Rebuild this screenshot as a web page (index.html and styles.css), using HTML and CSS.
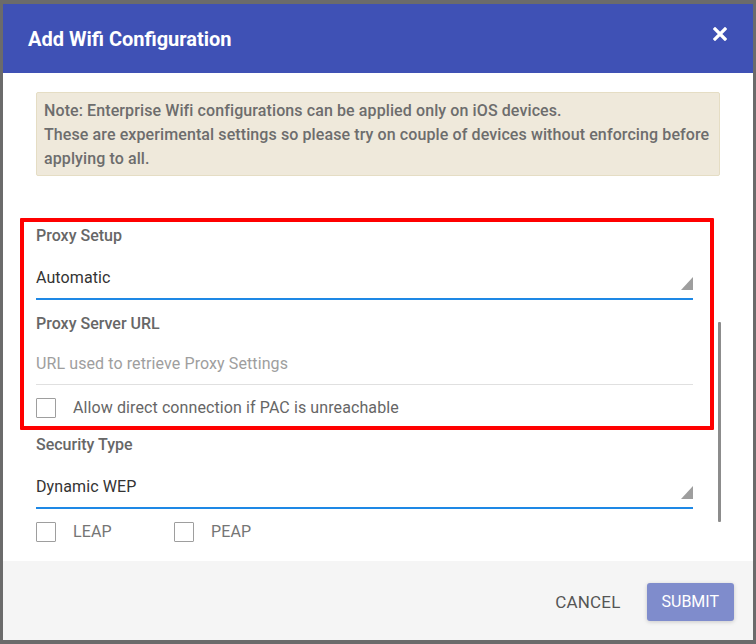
FILE: index.html
```html
<!DOCTYPE html>
<html lang="en">
<head>
<meta charset="utf-8">
<title>Add Wifi Configuration</title>
<link rel="stylesheet" href="styles.css">
</head>
<body>
<div class="backdrop">
  <div class="dialog">
    <div class="header">
      <h1 class="title">Add Wifi Configuration</h1>
      <svg class="close" width="14" height="14" viewBox="0 0 14 14" aria-label="Close">
        <path d="M2 2 L12 12 M12 2 L2 12" stroke="#fff" stroke-width="3.2" stroke-linecap="square"/>
      </svg>
    </div>
    <div class="body">
      <div class="note">
        Note: Enterprise Wifi configurations can be applied only on iOS devices.<br>
        These are experimental settings so please try on couple of devices without enforcing before applying to all.
      </div>
      <div class="form">
        <div class="field">
          <div class="label">Proxy Setup</div>
          <div class="select">
            <span class="value">Automatic</span>
            <svg class="arrow" width="12" height="13" viewBox="0 0 12 13"><path d="M12 0 L12 13 L0 13 Z" fill="#9e9e9e"/></svg>
          </div>
        </div>
        <div class="field">
          <div class="label">Proxy Server URL</div>
          <div class="input"><span class="placeholder">URL used to retrieve Proxy Settings</span></div>
        </div>
        <div class="check-row">
          <label class="check"><span class="box"></span><span class="check-text">Allow direct connection if PAC is unreachable</span></label>
        </div>
        <div class="field field-sec">
          <div class="label">Security Type</div>
          <div class="select">
            <span class="value">Dynamic WEP</span>
            <svg class="arrow" width="12" height="13" viewBox="0 0 12 13"><path d="M12 0 L12 13 L0 13 Z" fill="#9e9e9e"/></svg>
          </div>
        </div>
        <div class="check-row">
          <label class="check check-fixed"><span class="box"></span><span class="check-text caps">LEAP</span></label>
          <label class="check"><span class="box"></span><span class="check-text caps">PEAP</span></label>
        </div>
      </div>
      <div class="scroll-thumb"></div>
      <div class="highlight"></div>
    </div>
    <div class="footer">
      <button class="btn btn-cancel">Cancel</button>
      <button class="btn btn-submit">Submit</button>
    </div>
  </div>
</div>
</body>
</html>
```
FILE: styles.css
```css
html, body {
  margin: 0;
  padding: 0;
  height: 100%;
  overflow: hidden;
}
body {
  background: #6b6b6b;
  font-family: Roboto, "Liberation Sans", Arial, sans-serif;
}
.backdrop {
  padding: 4px 3px 4px 3px;
}
.dialog {
  width: 750px;
  height: 636px;
  background: #fff;
  display: flex;
  flex-direction: column;
}
.header {
  height: 69px;
  flex: 0 0 69px;
  background: #3f51b5;
  display: flex;
  align-items: center;
  justify-content: space-between;
  padding: 0 26px 0 25px;
  box-sizing: border-box;
}
.title {
  margin: 0;
  padding-top: 1px;
  color: #fff;
  font-size: 20px;
  font-weight: 700;
  line-height: 24px;
}
.close {
  display: block;
  margin-top: -9px;
}
.body {
  flex: 1;
  position: relative;
  padding: 19px 33px 0 33px;
  overflow: hidden;
}
.note {
  background: #efe9db;
  border: 1px solid #e5ddc4;
  border-radius: 2px;
  padding: 6px 7px 4px 7px;
  color: #6d6d6d;
  font-size: 16px;
  font-weight: 500;
  line-height: 24px;
  letter-spacing: 0.1px;
}
.form {
  width: 657px;
  padding-top: 50px;
}
.label {
  font-size: 16px;
  font-weight: 500;
  line-height: 20px;
  color: #676767;
}
.select {
  margin-top: 22px;
  display: flex;
  justify-content: space-between;
  align-items: flex-end;
  padding-bottom: 8px;
  border-bottom: 2px solid #1e88e5;
}
.value {
  font-size: 16px;
  line-height: 20px;
  color: #333;
  margin-bottom: 2px;
  letter-spacing: 0.1px;
}
.arrow {
  display: block;
}
.input {
  margin-top: 20px;
  padding-bottom: 10px;
  border-bottom: 1px solid #e0e0e0;
}
.placeholder {
  display: block;
  font-size: 16px;
  line-height: 20px;
  color: #9e9e9e;
  letter-spacing: 0.1px;
}
.field + .field {
  margin-top: 14px;
}
.field-sec {
  margin-top: 17px;
}
.check-row {
  display: flex;
  margin-top: 13px;
}
.check {
  display: flex;
  align-items: center;
}
.check-fixed {
  width: 138px;
}
.box {
  width: 18px;
  height: 18px;
  border: 1px solid #9e9e9e;
  border-radius: 1px;
  background: #fff;
}
.check-text {
  margin-left: 17px;
  font-size: 16px;
  line-height: 20px;
  color: #666;
  letter-spacing: 0.1px;
}
.caps {
  color: #757575;
}
.scroll-thumb {
  position: absolute;
  left: 715px;
  top: 249px;
  width: 3px;
  height: 200px;
  background: #8c8c8c;
  border-radius: 1px;
}
.highlight {
  position: absolute;
  left: 17px;
  top: 145px;
  width: 686px;
  height: 204px;
  border: 4px solid #ff0000;
  border-radius: 1px;
}
.footer {
  flex: 0 0 79px;
  height: 79px;
  background: #f5f5f5;
  display: flex;
  align-items: center;
  justify-content: flex-end;
  padding: 2px 19px 0 0;
  box-sizing: border-box;
}
.btn {
  font-family: Roboto, "Liberation Sans", Arial, sans-serif;
  font-size: 16px;
  text-transform: uppercase;
  border: 0;
  height: 38px;
  line-height: 38px;
  padding: 0 15px;
  cursor: pointer;
}
.btn-cancel {
  background: transparent;
  color: #555;
  font-size: 17px;
  letter-spacing: 0.2px;
  margin-right: 11px;
}
.btn-submit {
  background: #7f8ccc;
  color: #fff;
  border-radius: 3px;
  box-shadow: 0 1px 4px rgba(0, 0, 0, 0.18);
}
```
